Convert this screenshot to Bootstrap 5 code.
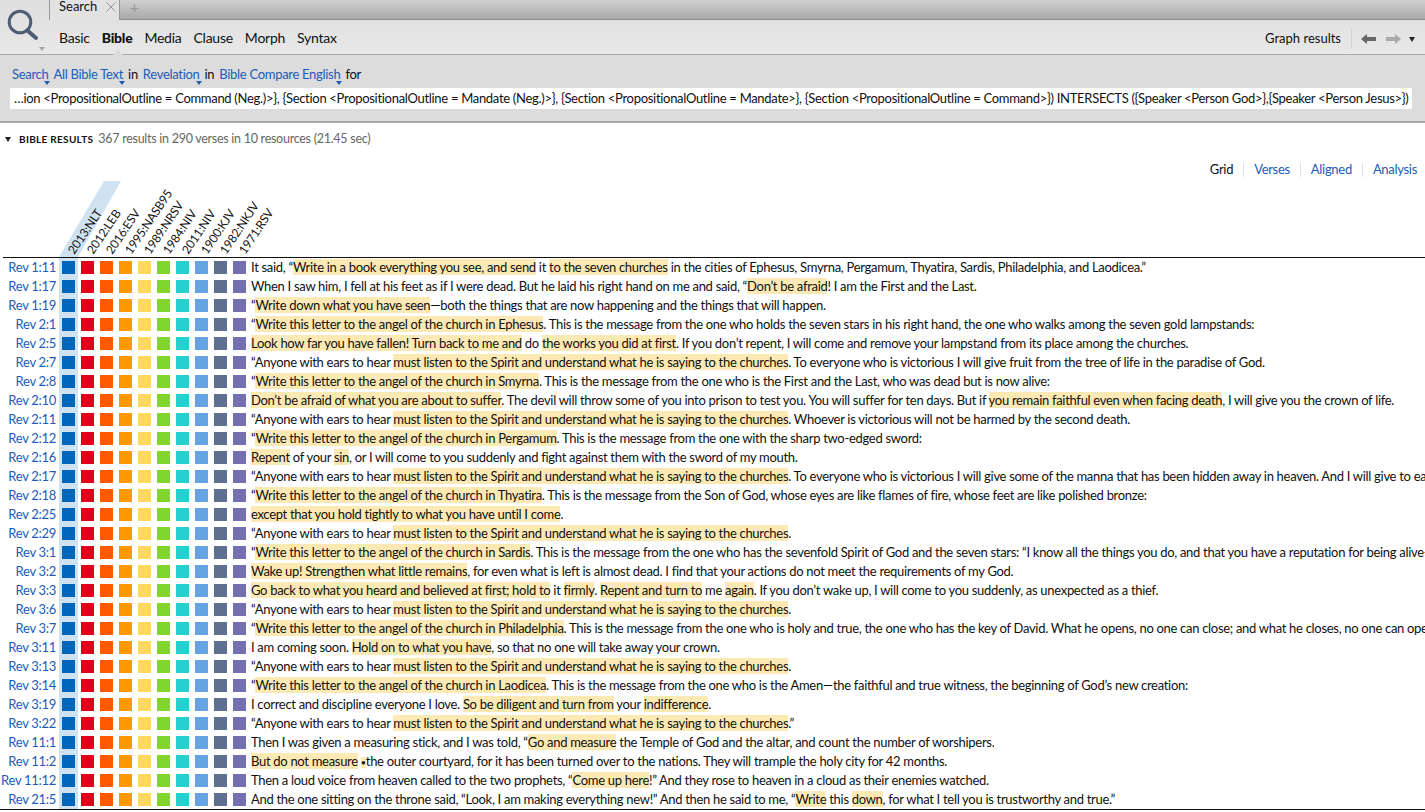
<!DOCTYPE html>
<html lang="en">
<head>
  <meta charset="UTF-8" />
  <title>Search</title>
  <link href="https://cdn.jsdelivr.net/npm/bootstrap@5.3.3/dist/css/bootstrap.min.css" rel="stylesheet" />
  <style>
    html, body { height: 812px; overflow: hidden; }
    body { font-family: "Lato", "Liberation Sans", sans-serif; font-size: 13px; color: #111; background: #fff; }
    .app-top { height: 55px; background: linear-gradient(#dedede, #e8e8e8); border-bottom: 1px solid #a9a9a9; position: relative; }
    .app-top::after { content: ""; position: absolute; left: 113px; bottom: -1px; border: 5px solid transparent; border-top: 0; border-bottom: 6px solid #dcdcdc; }
    .search-btn { width: 49px; height: 54px; flex: none; }
    .search-btn svg { display: block; }
    .tab-strip { height: 20px; }
    .tab-on { width: 70px; height: 20px; background: #e2e2e2; border-left: 1px solid #999; padding-left: 9px; line-height: 13px; flex: none; }
    .tab-on svg { margin: 2px 0 0 9px; }
    .tab-rest { background: linear-gradient(#cfcfcf, #a9a9a9); border-bottom: 1px solid #8e8e8e; border-left: 1px solid #999; color: #999; font-size: 15px; line-height: 14px; padding-left: 10px; }
    .kind-tabs { height: 34px; padding-left: 10px; gap: 12px; font-size: 14px; letter-spacing: -.25px; }
    .kind-tabs b { font-weight: 900; }
    .tool-row { height: 34px; padding: 4px 10px 0 0; }
    .tool-sep { width: 1px; height: 20px; background: #d4d4d4; margin: 0 9px 0 10px; }
    .query-panel { height: 68px; background: #dcdcdc; border-bottom: 2px solid #a8a8a8; padding: 10px 13px 0 10px; }
    .query-line { height: 23px; margin-left: 2px; gap: 5px; letter-spacing: -.3px; }
    .query-line a { color: #1d5bb8; text-decoration: none; position: relative; }
    .query-line a::after { content: ""; position: absolute; right: -2px; bottom: 0; border: 3px solid transparent; border-top: 4px solid #1d5bb8; }
    .query-box { height: 21px; background: #fff; padding-left: 4px; line-height: 20px; letter-spacing: -.3px; white-space: nowrap; overflow: hidden; }
    .results-head { height: 32px; padding-left: 4px; font-size: 12.5px; letter-spacing: -.27px; color: #666; }
    .results-tri { width: 0; height: 0; border: 3px solid transparent; border-top: 5px solid #222; margin: 3px 8px 0 1px; }
    .results-title { font-size: 10px; font-weight: 700; letter-spacing: .3px; color: #111; margin-right: 5px; }
    .view-links { height: 30px; gap: 10px; padding-right: 8px; letter-spacing: -.3px; }
    .view-links a { color: #1d5bb8; text-decoration: none; }
    .view-links i { width: 1px; height: 14px; background: #e2e2e2; }
    .grid-head { height: 74px; position: relative; padding-left: 59px; margin-top: -1px; }
    .grid-head::after { content: ""; position: absolute; left: 3px; right: 0; bottom: 0; height: 1px; background: #111; }
    .grid-band { position: absolute; left: 0; top: -3px; }
    .head-col { width: 19px; height: 73px; position: relative; flex: none; }
    .head-col span { position: absolute; left: 17px; bottom: 1px; transform-origin: left bottom; transform: rotate(-56deg); font-size: 12px; line-height: 12px; letter-spacing: -.2px; white-space: nowrap; }
    .verse-row { height: 19px; white-space: nowrap; }
    .verse-ref { width: 56px; flex: none; text-align: right; color: #1d5bb8; margin-right: 3px; line-height: 19px; letter-spacing: -.3px; text-decoration: none; }
    .sq-col { width: 19px; height: 19px; flex: none; display: flex; align-items: center; justify-content: center; }
    .sq-col.on { background: #cfe2f1; }
    .sq-col i { width: 13px; height: 13px; display: block; }
    .verse-text { margin-left: 2px; line-height: 19px; letter-spacing: -.3px; overflow: hidden; }
    .hl { background: #fde9b3; }
    .hl-dot { font-size: 9px; }
    .grid-foot { height: 1px; background: #111; }
  </style>
</head>
<body>
  <div class="app-top d-flex">
    <div class="search-btn">
      <svg width="49" height="54" viewBox="0 0 49 54">
        <circle cx="20" cy="22" r="10.8" fill="none" stroke="#4f5c75" stroke-width="3"/>
        <path d="M28 31 L36 38" stroke="#4f5c75" stroke-width="4" stroke-linecap="round"/>
        <path d="M39 47 H45 L42 51 Z" fill="#a5a5a5"/>
      </svg>
    </div>
    <div class="flex-grow-1">
      <div class="tab-strip d-flex">
        <div class="tab-on d-flex align-items-start">Search
          <svg width="10" height="10" viewBox="0 0 10 10"><path d="M.5 .5 L9.5 9.5 M9.5 .5 L.5 9.5" stroke="#999" stroke-width="1"/></svg>
        </div>
        <div class="tab-rest flex-grow-1">+</div>
      </div>
      <div class="d-flex align-items-center justify-content-between">
        <div class="kind-tabs d-flex align-items-center"><span>Basic</span><b>Bible</b><span>Media</span><span>Clause</span><span>Morph</span><span>Syntax</span></div>
        <div class="tool-row d-flex align-items-center">
          <span>Graph results</span>
          <span class="tool-sep"></span>
          <svg width="16" height="10" viewBox="0 0 16 10"><path d="M0 5 L6 0 V3 H15 V7 H6 V10 Z" fill="#666"/></svg>
          <svg class="ms-2" width="16" height="10" viewBox="0 0 16 10"><path d="M16 5 L10 0 V3 H1 V7 H10 V10 Z" fill="#aaa"/></svg>
          <svg class="ms-2" width="6" height="5" viewBox="0 0 6 5"><path d="M0 0 H6 L3 5 Z" fill="#222"/></svg>
        </div>
      </div>
    </div>
  </div>

  <div class="query-panel">
    <div class="query-line d-flex"><a href="#">Search</a><a href="#">All Bible Text</a><span>in</span><a href="#">Revelation</a><span>in</span><a href="#">Bible Compare English</a><span>for</span></div>
    <div class="query-box">&hellip;ion &lt;PropositionalOutline = Command (Neg.)&gt;}, {Section &lt;PropositionalOutline = Mandate (Neg.)&gt;}, {Section &lt;PropositionalOutline = Mandate&gt;}, {Section &lt;PropositionalOutline = Command&gt;}) INTERSECTS ({Speaker &lt;Person God&gt;},{Speaker &lt;Person Jesus&gt;})</div>
  </div>

  <div class="results-head d-flex align-items-center">
    <div class="results-tri"></div><span class="results-title">BIBLE RESULTS</span><span>367 results in 290 verses in 10 resources (21.45 sec)</span>
  </div>
  <div class="view-links d-flex justify-content-end align-items-center">
    <span>Grid</span><i></i><a href="#">Verses</a><i></i><a href="#">Aligned</a><i></i><a href="#">Analysis</a>
  </div>

  <div class="grid-head d-flex" id="gridHead">
    <svg class="grid-band" width="130" height="77" viewBox="0 0 130 77"><polygon points="59,76 78,76 121,0 104,0" fill="#cfe2f1"/></svg>
  </div>
  <div id="gridRows"></div>
  <div class="grid-foot"></div>

  <script src="https://cdn.jsdelivr.net/npm/bootstrap@5.3.3/dist/js/bootstrap.bundle.min.js"></script>
  <script>
    const versions = ['2013:NLT', '2012:LEB', '2016:ESV', '1995:NASB95', '1989:NRSV', '1984:NIV', '2011:NIV', '1900:KJV', '1982:NKJV', '1971:RSV'];
    const colors = ['#0066bb', '#e0001b', '#ff5a00', '#ff9900', '#ffd85c', '#80d62c', '#27d0d0', '#65a3e3', '#5f6f8f', '#7470b0'];
    const ears = '“Anyone with ears to hear [must listen to the Spirit and understand what he is saying to the churches]';
    // [ ] marks the highlighted runs
    const verses = [
      ['Rev 1:11', 'It said, “[Write in a book everything you see, and send] it [to the seven churches] in the cities of Ephesus, Smyrna, Pergamum, Thyatira, Sardis, Philadelphia, and Laodicea.”'],
      ['Rev 1:17', 'When I saw him, I fell at his feet as if I were dead. But he laid his right hand on me and said, “[Don’t be afraid]! I am the First and the Last.'],
      ['Rev 1:19', '“[Write down what you have seen]—both the things that are now happening and the things that will happen.'],
      ['Rev 2:1', '“[Write this letter to the angel of the church in Ephesus]. This is the message from the one who holds the seven stars in his right hand, the one who walks among the seven gold lampstands:'],
      ['Rev 2:5', '[Look how far you have fallen! Turn back to me and] do [the works you did at first]. If you don’t repent, I will come and remove your lampstand from its place among the churches.'],
      ['Rev 2:7', ears + '. To everyone who is victorious I will give fruit from the tree of life in the paradise of God.'],
      ['Rev 2:8', '“[Write this letter to the angel of the church in Smyrna]. This is the message from the one who is the First and the Last, who was dead but is now alive:'],
      ['Rev 2:10', '[Don’t be afraid of what you are about to suffer]. The devil will throw some of you into prison to test you. You will suffer for ten days. But if [you remain faithful even when facing death], I will give you the crown of life.'],
      ['Rev 2:11', ears + '. Whoever is victorious will not be harmed by the second death.'],
      ['Rev 2:12', '“[Write this letter to the angel of the church in Pergamum]. This is the message from the one with the sharp two-edged sword:'],
      ['Rev 2:16', '[Repent] of your [sin], or I will come to you suddenly and fight against them with the sword of my mouth.'],
      ['Rev 2:17', ears + '. To everyone who is victorious I will give some of the manna that has been hidden away in heaven. And I will give to each'],
      ['Rev 2:18', '“[Write this letter to the angel of the church in Thyatira]. This is the message from the Son of God, whose eyes are like flames of fire, whose feet are like polished bronze:'],
      ['Rev 2:25', '[except that you hold tightly to what you have until I come].'],
      ['Rev 2:29', ears + '.'],
      ['Rev 3:1', '“[Write this letter to the angel of the church in Sardis]. This is the message from the one who has the sevenfold Spirit of God and the seven stars: “I know all the things you do, and that you have a reputation for being alive—'],
      ['Rev 3:2', '[Wake up! Strengthen what little remains], for even what is left is almost dead. I find that your actions do not meet the requirements of my God.'],
      ['Rev 3:3', '[Go back to what you heard and believed at first; hold to] it [firmly]. [Repent and turn to] me [again]. If you don’t wake up, I will come to you suddenly, as unexpected as a thief.'],
      ['Rev 3:6', ears + '.'],
      ['Rev 3:7', '“[Write this letter to the angel of the church in Philadelphia]. This is the message from the one who is holy and true, the one who has the key of David. What he opens, no one can close; and what he closes, no one can open.'],
      ['Rev 3:11', 'I am coming soon. [Hold on to what you have], so that no one will take away your crown.'],
      ['Rev 3:13', ears + '.'],
      ['Rev 3:14', '“[Write this letter to the angel of the church in Laodicea]. This is the message from the one who is the Amen—the faithful and true witness, the beginning of God’s new creation:'],
      ['Rev 3:19', 'I correct and discipline everyone I love. [So be diligent and turn from] your [indifference].'],
      ['Rev 3:22', ears + '.”'],
      ['Rev 11:1', 'Then I was given a measuring stick, and I was told, “[Go and measure] the Temple of God and the altar, and count the number of worshipers.'],
      ['Rev 11:2', '[But do not measure] <span class="hl hl-dot">•</span>the outer courtyard, for it has been turned over to the nations. They will trample the holy city for 42 months.'],
      ['Rev 11:12', 'Then a loud voice from heaven called to the two prophets, “[Come up here]!” And they rose to heaven in a cloud as their enemies watched.'],
      ['Rev 21:5', 'And the one sitting on the throne said, “Look, I am making everything new!” And then he said to me, “[Write] this [down], for what I tell you is trustworthy and true.”']
    ];

    const head = document.getElementById('gridHead');
    versions.forEach(v => {
      const col = document.createElement('div');
      col.className = 'head-col';
      col.innerHTML = '<span>' + v + '</span>';
      head.appendChild(col);
    });

    const squares = colors.map((c, i) =>
      '<div class="sq-col' + (i === 0 ? ' on' : '') + '"><i style="background:' + c + '"></i></div>').join('');
    document.getElementById('gridRows').innerHTML = verses.map(([ref, text]) => {
      const marked = text.replace(/\[/g, '<span class="hl">').replace(/\]/g, '</span>');
      return '<div class="verse-row d-flex"><a class="verse-ref" href="#">' + ref + '</a>' + squares + '<div class="verse-text">' + marked + '</div></div>';
    }).join('');
  </script>
</body>
</html>
